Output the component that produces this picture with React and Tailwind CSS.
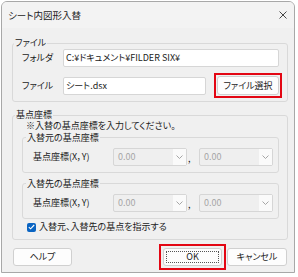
import React from "react";

const Combo = () => (
  <div className="flex h-[18px] w-[74px] items-center rounded-[2px] border border-[#d6d6d6] bg-[#efefef]">
    <span className="flex-1 pl-[4px] text-[#a6a6a6]">0.00</span>
    <span className="flex h-full w-[13px] items-center justify-center bg-[#fafafa]">
      <svg width="7" height="4" viewBox="0 0 7 4">
        <path d="M0.5 0.5L3.5 3.5L6.5 0.5" fill="none" stroke="#9c9c9c" strokeWidth="0.9" />
      </svg>
    </span>
  </div>
);

const Button = ({ children, className = "" }) => (
  <button
    className={`flex h-[18px] items-center justify-center rounded-[3px] border border-[#d0d0d0] bg-[#fdfdfd] text-[#1b1b1b] ${className}`}
  >
    {children}
  </button>
);

const App = () => {
  return (
    <div className="h-[277px] w-[298px] bg-white font-['Noto_Sans_CJK_JP',sans-serif] text-[9px] text-[#1b1b1b] [font-feature-settings:'palt']">
      {/* Window */}
      <div className="ml-[1px] mt-[1px] flex h-[272px] w-[294px] flex-col overflow-hidden rounded-t-[6px] border border-[#a8a8a8] bg-[#f0f0f0]">
        {/* Title bar */}
        <div className="flex h-[26px] items-center justify-between bg-[#f3f3f3] pl-[6px] pr-[7px]">
          <span className="text-[9.5px]">シート内図形入替</span>
          <svg width="8" height="8" viewBox="0 0 8 8">
            <path d="M0.5 0.5L7.5 7.5M7.5 0.5L0.5 7.5" stroke="#333" strokeWidth="0.9" />
          </svg>
        </div>

        {/* ファイル */}
        <fieldset className="ml-[10px] mt-[9px] w-[276px] rounded-[3px] border border-[#d9d9d9] p-0">
          <legend className="ml-[1px] px-[1px] leading-[12px]">ファイル</legend>
          <div className="flex flex-col pb-[3px] pl-[9px] pr-[5px]">
            <div className="flex h-[18px] items-center">
              <span className="w-[41px]">フォルダ</span>
              <div className="flex h-[18px] w-[216px] items-center rounded-[2px] border border-[#d6d6d6] bg-white pl-[2px]">
                C:¥ドキュメント¥FILDER SIX¥
              </div>
            </div>
            <div className="mt-[6px] flex h-[25px] items-center">
              <span className="w-[41px]">ファイル</span>
              <div className="flex h-[18px] w-[143px] items-center rounded-[2px] border border-[#d6d6d6] bg-white pl-[2px]">
                シート.dsx
              </div>
              {/* red highlight */}
              <div className="ml-auto border-2 border-[#e30613] p-[1px]">
                <Button className="h-[19px] w-[62px]">ファイル選択</Button>
              </div>
            </div>
          </div>
        </fieldset>

        {/* 基点座標 */}
        <fieldset className="ml-[10px] mt-[7px] w-[276px] rounded-[3px] border border-[#d9d9d9] p-0">
          <legend className="ml-[2px] px-[1px] leading-[12px]">基点座標</legend>
          <div className="flex flex-col pb-[6px] pl-[9px] pr-[8px]">
            <p className="pl-[4px] leading-[10px]">※入替の基点座標を入力してください。</p>

            {["入替元の基点座標", "入替先の基点座標"].map((title, i) => (
              <fieldset
                key={title}
                className={`w-[257px] rounded-[3px] border border-[#d9d9d9] p-0 ${i === 1 ? "mt-[5px]" : "mt-[1px]"}`}
              >
                <legend className="ml-[3px] px-[1px] leading-[11px]">{title}</legend>
                <div className="flex items-center pb-[6px] pl-[10px] pr-[5px] pt-[5px]">
                  <span className="w-[80px]">基点座標(X，Y)</span>
                  <Combo />
                  <span className="flex h-[18px] w-[12px] items-end pb-[2px] pl-[1px] leading-[10px]">,</span>
                  <Combo />
                </div>
              </fieldset>
            ))}

            <label className="ml-[5px] mt-[2px] flex h-[12px] items-center gap-[3px]">
              <span className="flex h-[9px] w-[9px] items-center justify-center rounded-[2px] bg-[#0a64c2]">
                <svg width="7" height="6" viewBox="0 0 7 6">
                  <path d="M0.8 3.1L2.6 4.8L6.2 1" fill="none" stroke="#fff" strokeWidth="1.1" />
                </svg>
              </span>
              入替元、入替先の基点を指示する
            </label>
          </div>
        </fieldset>

        {/* Buttons */}
        <div className="mt-[4px] flex items-center pl-[11px] pr-[7px]">
          <Button className="w-[59px]">ヘルプ</Button>
          {/* red highlight */}
          <div className="ml-auto border-2 border-[#e30613] p-[2px]">
            <Button className="relative w-[59px]">
              <span className="absolute inset-[2px] border border-dotted border-[#555]" />
              OK
            </Button>
          </div>
          <Button className="ml-[1px] w-[60px]">キャンセル</Button>
        </div>
      </div>
    </div>
  );
};

export default App;
